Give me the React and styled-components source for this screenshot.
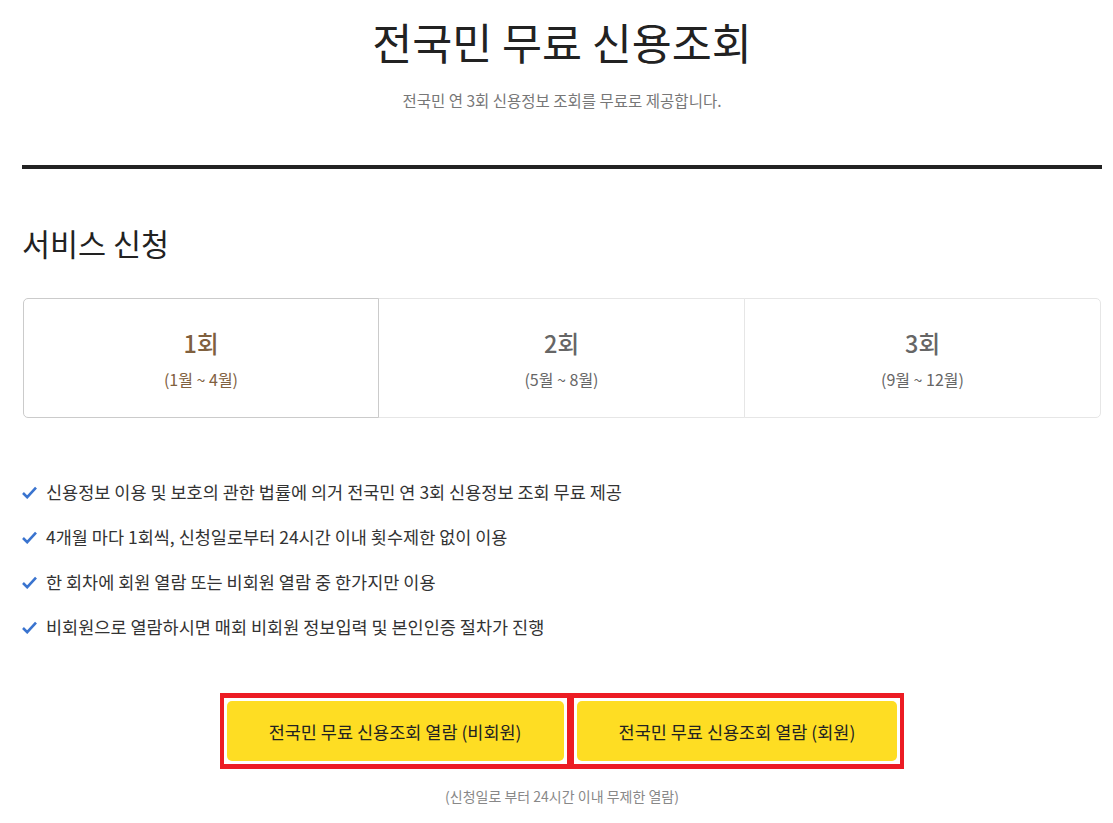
import React, { useState } from "react";
import styled, { createGlobalStyle } from "styled-components";

const Global = createGlobalStyle`
  html, body { margin: 0; padding: 0; background: #fff; }
  body { font-family: "Noto Sans CJK KR", "Noto Sans", sans-serif; color: #222; }
  * { box-sizing: border-box; }
`;

const Page = styled.div`
  width: 1080px;
  margin-left: 22px;
  padding-top: 14px;
`;

const Header = styled.header`
  display: flex;
  flex-direction: column;
  align-items: center;
  padding-bottom: 55px;
  border-bottom: 4px solid #222;
`;

const Title = styled.h1`
  margin: 0;
  font-size: 43.5px;
  font-weight: 400;
  line-height: 56px;
  color: #222;
`;

const Subtitle = styled.p`
  margin: 20px 0 0;
  font-size: 15.5px;
  line-height: 20px;
  color: #777;
`;

const SectionTitle = styled.h2`
  margin: 54px 0 0;
  font-size: 30.5px;
  font-weight: 400;
  line-height: 40px;
  color: #222;
`;

const Tabs = styled.div`
  display: flex;
  margin: 35px 0 0 1px;
  width: 1078px;
  height: 120px;
`;

const Tab = styled.button`
  flex: ${(p) => (p.$last ? "1 1 auto" : `0 0 ${p.$w}px`)};
  display: flex;
  flex-direction: column;
  align-items: center;
  justify-content: center;
  gap: 11px;
  margin-left: ${(p) => (p.$first ? "0" : "-1px")};
  position: relative;
  z-index: ${(p) => (p.$active ? 1 : 0)};
  border: 1px solid ${(p) => (p.$active ? "#cbcbcb" : "#e6e6e6")};
  border-radius: ${(p) => (p.$first ? "5px 0 0 5px" : p.$last ? "0 5px 5px 0" : "0")};
  background: #fff;
  font-family: inherit;
  cursor: pointer;
  padding: 0;
  color: ${(p) => (p.$active ? "#80603e" : "#666")};
`;

const TabTitle = styled.span`
  font-size: 23.5px;
  font-weight: 500;
  line-height: 30px;
`;

const TabSub = styled.span`
  font-size: 16px;
  line-height: 20px;
`;

const List = styled.ul`
  list-style: none;
  margin: 62px 0 0;
  padding: 0;
  display: flex;
  flex-direction: column;
  gap: 21px;
`;

const Item = styled.li`
  display: flex;
  align-items: center;
  gap: 9px;
  font-size: 17.5px;
  line-height: 24px;
  color: #333;
`;

const Check = () => (
  <svg width="15" height="13" viewBox="0 0 15 13" aria-hidden="true">
    <path d="M1 7 L5.2 11.2 L14 1.6" fill="none" stroke="#3a74cf" strokeWidth="2.6" />
  </svg>
);

const Actions = styled.div`
  display: flex;
  justify-content: center;
  margin: 54px 0 0;
`;

const Highlight = styled.div`
  border-style: solid;
  border-color: #ec1c24;
  border-width: 5px 4px;
  padding: 3px;
  margin-left: ${(p) => (p.$joined ? "-1px" : "0")};
`;

const YellowButton = styled.button`
  height: 60px;
  padding: 0 42px;
  border: none;
  border-radius: 5px;
  background: #fedd23;
  font-family: inherit;
  font-size: 17.5px;
  color: #222;
  cursor: pointer;
`;

const Note = styled.p`
  margin: 17px 0 0;
  text-align: center;
  font-size: 14px;
  line-height: 20px;
  color: #888;
`;

const rounds = [
  { t: "1회", s: "(1월 ~ 4월)", w: 356 },
  { t: "2회", s: "(5월 ~ 8월)", w: 367 },
  { t: "3회", s: "(9월 ~ 12월)", w: 357 },
];

const items = [
  "신용정보 이용 및 보호의 관한 법률에 의거 전국민 연 3회 신용정보 조회 무료 제공",
  "4개월 마다 1회씩, 신청일로부터 24시간 이내 횟수제한 없이 이용",
  "한 회차에 회원 열람 또는 비회원 열람 중 한가지만 이용",
  "비회원으로 열람하시면 매회 비회원 정보입력 및 본인인증 절차가 진행",
];

export default function App() {
  const [active, setActive] = useState(0);
  return (
    <>
      <Global />
      <Page>
        <Header>
          <Title>전국민 무료 신용조회</Title>
          <Subtitle>전국민 연 3회 신용정보 조회를 무료로 제공합니다.</Subtitle>
        </Header>
        <SectionTitle>서비스 신청</SectionTitle>
        <Tabs>
          {rounds.map((r, i) => (
            <Tab
              key={r.t}
              $w={r.w}
              $active={active === i}
              $first={i === 0}
              $last={i === rounds.length - 1}
              onClick={() => setActive(i)}
            >
              <TabTitle>{r.t}</TabTitle>
              <TabSub>{r.s}</TabSub>
            </Tab>
          ))}
        </Tabs>
        <List>
          {items.map((t) => (
            <Item key={t}>
              <Check />
              {t}
            </Item>
          ))}
        </List>
        <Actions>
          <Highlight>
            <YellowButton>전국민 무료 신용조회 열람 (비회원)</YellowButton>
          </Highlight>
          <Highlight $joined>
            <YellowButton>전국민 무료 신용조회 열람 (회원)</YellowButton>
          </Highlight>
        </Actions>
        <Note>(신청일로 부터 24시간 이내 무제한 열람)</Note>
      </Page>
    </>
  );
}
